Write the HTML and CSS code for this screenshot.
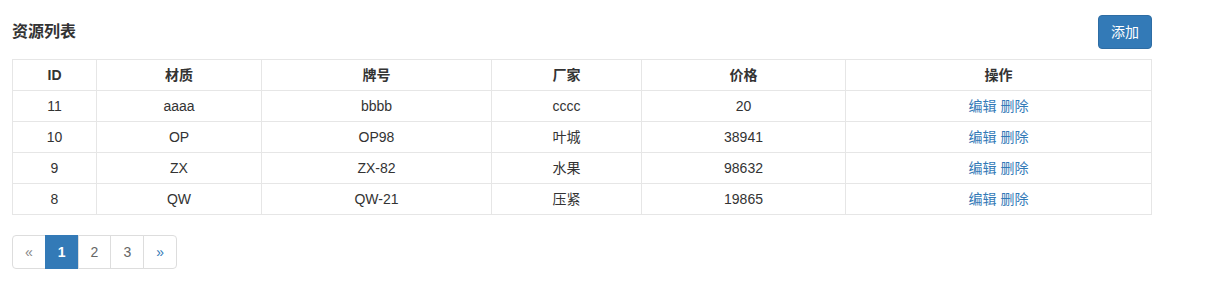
FILE: index.html
```html
<!DOCTYPE html>
<html lang="zh">
<head>
<meta charset="utf-8">
<title>资源列表</title>
<link rel="stylesheet" href="styles.css">
</head>
<body>
<div class="page">
  <div class="toolbar">
    <h2 class="title">资源列表</h2>
    <button class="btn-primary" type="button">添加</button>
  </div>
  <table class="grid">
    <colgroup>
      <col class="c-id"><col class="c-mat"><col class="c-no"><col class="c-fac"><col class="c-price"><col>
    </colgroup>
    <thead>
      <tr><th>ID</th><th>材质</th><th>牌号</th><th>厂家</th><th>价格</th><th>操作</th></tr>
    </thead>
    <tbody>
      <tr><td>11</td><td>aaaa</td><td>bbbb</td><td>cccc</td><td>20</td><td><a href="#">编辑</a> <a href="#">删除</a></td></tr>
      <tr><td>10</td><td>OP</td><td>OP98</td><td>叶城</td><td>38941</td><td><a href="#">编辑</a> <a href="#">删除</a></td></tr>
      <tr><td>9</td><td>ZX</td><td>ZX-82</td><td>水果</td><td>98632</td><td><a href="#">编辑</a> <a href="#">删除</a></td></tr>
      <tr><td>8</td><td>QW</td><td>QW-21</td><td>压紧</td><td>19865</td><td><a href="#">编辑</a> <a href="#">删除</a></td></tr>
    </tbody>
  </table>
  <ul class="pager">
    <li class="disabled"><span>&laquo;</span></li>
    <li class="active"><span>1</span></li>
    <li><a href="#">2</a></li>
    <li><a href="#">3</a></li>
    <li class="next"><a href="#">&raquo;</a></li>
  </ul>
</div>
</body>
</html>
```

FILE: styles.css
```css
html, body {
  margin: 0;
  padding: 0;
  background: #fff;
}
body {
  font-family: "Liberation Sans", Arial, "Noto Sans CJK SC", sans-serif;
  font-size: 14px;
  line-height: 20px;
  color: #333;
}
.page {
  width: 1140px;
  margin-left: 12px;
  padding-top: 15px;
}
.toolbar {
  display: flex;
  justify-content: space-between;
  align-items: center;
  height: 34px;
}
.title {
  margin: 0;
  font-size: 16px;
  font-weight: bold;
  line-height: 20px;
  color: #333;
}
.btn-primary {
  height: 34px;
  padding: 6px 12px;
  font-family: inherit;
  font-size: 14px;
  line-height: 20px;
  color: #fff;
  background: #337ab7;
  border: 1px solid #2e6da4;
  border-radius: 4px;
  cursor: pointer;
}
.grid {
  margin-top: 10px;
  width: 1140px;
  border-collapse: collapse;
  table-layout: fixed;
  border: 1px solid #e6e6e6;
}
.c-id { width: 84px; }
.c-mat { width: 165px; }
.c-no { width: 230px; }
.c-fac { width: 150px; }
.c-price { width: 204px; }
.grid th, .grid td {
  border: 1px solid #e6e6e6;
  padding: 5px;
  text-align: center;
  line-height: 20px;
  height: 20px;
}
.grid th {
  font-weight: bold;
  color: #333;
}
.grid a {
  color: #337ab7;
  text-decoration: none;
}
.pager {
  display: flex;
  list-style: none;
  margin: 20px 0 0;
  padding: 0;
}
.pager li a, .pager li span {
  display: block;
  padding: 6px 12px;
  line-height: 20px;
  border: 1px solid #ddd;
  margin-left: -1px;
  background: #fff;
  color: #666;
  text-decoration: none;
}
.pager li:first-child span {
  margin-left: 0;
  border-radius: 4px 0 0 4px;
}
.pager li:last-child a {
  border-radius: 0 4px 4px 0;
}
.pager li.disabled span {
  color: #888;
}
.pager li.active span {
  background: #337ab7;
  border-color: #337ab7;
  color: #fff;
  font-weight: bold;
}
.pager li.next a {
  color: #337ab7;
}
```
